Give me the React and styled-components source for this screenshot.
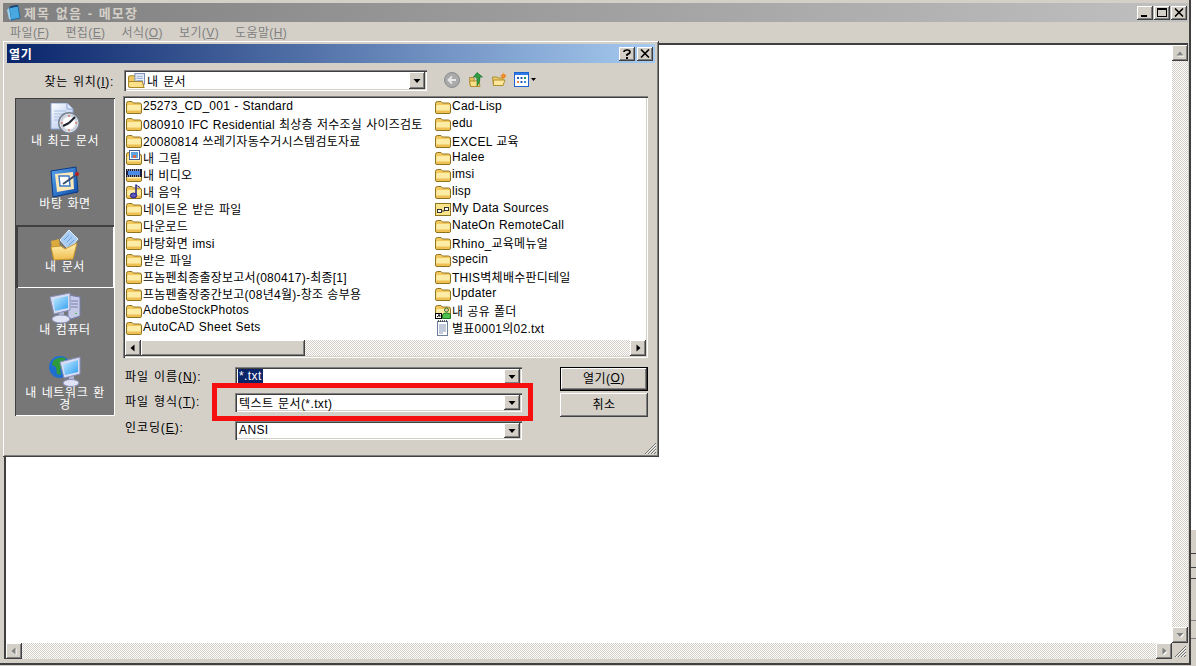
import React from "react";
import styled, { createGlobalStyle } from "styled-components";

const GlobalStyle = createGlobalStyle`
  html, body {
    margin: 0;
    padding: 0;
    background: #d4d0c8;
    overflow: hidden;
  }
  * {
    box-sizing: border-box;
  }
  body {
    font-family: "Liberation Sans", "Noto Sans CJK KR", sans-serif;
    font-size: 12px;
    color: #000;
  }
`;

const raised = `
  background: #d4d0c8;
  box-shadow: inset -1px -1px #404040, inset 1px 1px #fff, inset -2px -2px #808080, inset 2px 2px #d4d0c8;
`;

const sunken = `
  background: #fff;
  box-shadow: inset 1px 1px #808080, inset 2px 2px #404040, inset -1px -1px #fff, inset -2px -2px #d4d0c8;
`;

const dither = `
  background: repeating-conic-gradient(#d4d0c8 0 25%, #fff 0 50%) 0 0 / 2px 2px;
`;

const Desktop = styled.div`
  position: relative;
  display: flex;
  width: 1196px;
  height: 666px;
`;

const Notepad = styled.div`
  display: flex;
  flex-direction: column;
  width: 1191px;
  height: 665px;
  padding: 3px 1px 4px 3px;
  background: #d4d0c8;
  border-right: 2px solid #404040;
  border-bottom: 2px solid #404040;
`;

const RightStrip = styled.div`
  flex: 1;
  background:
    linear-gradient(#404040, #404040) 0 553px / 100% 1px no-repeat,
    linear-gradient(#404040, #404040) 0 567px / 100% 1px no-repeat,
    linear-gradient(#404040, #404040) 0 578px / 100% 1px no-repeat,
    linear-gradient(#808080, #808080) 0 620px / 100% 1px no-repeat,
    linear-gradient(#808080, #808080) 0 638px / 100% 1px no-repeat,
    linear-gradient(#fff 530px, #d4d0c8 530px);
`;

const TitleBar = styled.div`
  display: flex;
  align-items: center;
  flex: 0 0 18px;
  padding: 0 1px 0 3px;
  background: linear-gradient(90deg, #808080, #c0c0c0);
`;

const TitleText = styled.span`
  margin-left: 2px;
  font-weight: 700;
  font-size: 13px;
  letter-spacing: 1.1px;
  word-spacing: 1px;
  color: #d4d0c8;
`;

const TitleButtons = styled.div`
  display: flex;
  gap: ${(p) => p.$gap}px;
  margin-left: auto;
`;

const CaptionButton = styled.div`
  ${raised}
  display: flex;
  align-items: center;
  justify-content: center;
  width: 16px;
  height: 14px;
`;

const MenuBar = styled.div`
  display: flex;
  align-items: center;
  gap: 16px;
  flex: 0 0 21px;
  padding: 0 0 3px 7px;
  color: #808080;
  letter-spacing: 0.4px;
`;

const EditArea = styled.div`
  flex: 1;
  display: grid;
  grid-template-columns: 1fr 16px;
  grid-template-rows: 1fr 16px;
  margin-left: 1px;
  min-height: 0;
  background: #fff;
  border-top: 2px solid #404040;
  border-left: 2px solid #404040;
`;

const EditText = styled.div`
  background: #fff;
`;

const VScroll = styled.div`
  display: flex;
  flex-direction: column;
  justify-content: space-between;
  ${dither}
`;

const HScroll = styled.div`
  display: flex;
  justify-content: space-between;
  height: 16px;
  ${dither}
`;

const ScrollButton = styled.div`
  ${raised}
  display: flex;
  align-items: center;
  justify-content: center;
  flex: 0 0 16px;
  width: 16px;
  height: 16px;
`;

const ScrollThumb = styled.div`
  ${raised}
  flex: 0 0 164px;
  height: 16px;
  margin-right: auto;
`;

const Corner = styled.div`
  position: relative;
  background: #d4d0c8;
`;

const Dialog = styled.div`
  position: absolute;
  left: 3px;
  top: 41px;
  display: flex;
  flex-direction: column;
  width: 656px;
  height: 416px;
  padding: 3px 4px;
  ${raised}
`;

const DialogTitle = styled.div`
  display: flex;
  align-items: center;
  flex: 0 0 19px;
  padding: 0 2px 0 2px;
  background: linear-gradient(90deg, #0a246a, #a6caf0);
  color: #fff;
  font-weight: 700;
  letter-spacing: 0.6px;
`;

const LookInRow = styled.div`
  display: flex;
  align-items: center;
  height: 21px;
  margin-top: 7px;
`;

const LookInLabel = styled.span`
  flex: 0 0 107px;
  text-align: right;
  letter-spacing: 0.7px;
  word-spacing: 1px;
  padding-bottom: 1px;
`;

const Combo = styled.div`
  ${sunken}
  position: relative;
  display: flex;
  align-items: center;
  flex: 0 0 ${(p) => p.$width}px;
  width: ${(p) => p.$width}px;
  height: ${(p) => p.$height}px;
  padding: 0 0 1px 4px;
  letter-spacing: 0.4px;
  word-spacing: 1px;
`;

const LookInCombo = styled(Combo)`
  margin-left: 10px;
`;

const LookInValue = styled.span`
  margin-left: 2px;
`;

const DropButton = styled.div`
  ${raised}
  position: absolute;
  top: 2px;
  right: 2px;
  bottom: 2px;
  width: 16px;
  display: flex;
  align-items: center;
  justify-content: center;
`;

const Toolbar = styled.div`
  display: flex;
  align-items: center;
  gap: 8px;
  margin-left: 17px;
  padding-bottom: 2px;
`;

const ToolIcon = styled.div`
  display: flex;
  align-items: center;
  margin-left: ${(p) => p.$shift || 0}px;
`;

const DialogBody = styled.div`
  display: flex;
  align-items: flex-start;
  margin-top: 5px;
`;

const PlacesBar = styled.div`
  flex: 0 0 100px;
  height: 318px;
  margin: 2px 0 0 8px;
  padding: 1px;
  background: #777;
  box-shadow: inset 1px 1px #404040, inset -1px -1px #fff;
`;

const PlaceItem = styled.div`
  display: flex;
  flex-direction: column;
  align-items: center;
  height: 63px;
  padding-top: 4px;
  color: #fff;
  text-align: center;
  line-height: 12px;
  letter-spacing: 0.6px;
  word-spacing: 1px;
  box-shadow: ${(p) => (p.$active ? "inset 2px 2px #404040, inset -1px -1px #fff" : "none")};
`;

const PlaceLabel = styled.span`
  display: block;
  width: 90px;
`;

const MainColumn = styled.div`
  flex: 0 0 525px;
  margin-left: 8px;
`;

const FileList = styled.div`
  ${sunken}
  display: flex;
  flex-direction: column;
  height: 262px;
  padding: 2px;
`;

const FileGrid = styled.div`
  flex: 1;
  display: grid;
  grid-auto-flow: column;
  grid-template-rows: repeat(14, 17px);
  grid-template-columns: 309px 1fr;
  padding-left: 1px;
  min-height: 0;
  overflow: hidden;
`;

const FileRow = styled.div`
  display: flex;
  align-items: center;
  gap: 1px;
  white-space: nowrap;
  letter-spacing: 0.25px;
  word-spacing: 0.5px;
`;

const FileName = styled.span`
  padding-bottom: 1px;
`;

const FormArea = styled.div`
  display: flex;
  padding-top: 9px;
`;

const FieldGrid = styled.div`
  display: grid;
  grid-template-columns: 112px 287px;
  grid-template-rows: 26px 28px 19px;
  flex: 0 0 399px;
`;

const FieldLabel = styled.span`
  height: 19px;
  line-height: 19px;
  margin-top: ${(p) => p.$nudge || 0}px;
  padding-left: 2px;
  letter-spacing: 0.9px;
  word-spacing: 1px;
`;

const Selected = styled.span`
  background: #0a246a;
  color: #fff;
  padding: 0 1px;
  line-height: 14px;
  margin-left: -1px;
`;

const ButtonColumn = styled.div`
  display: flex;
  flex-direction: column;
  gap: 2px;
  margin-left: 38px;
`;

const PushButton = styled.div`
  ${raised}
  display: flex;
  align-items: center;
  justify-content: center;
  width: 88px;
  height: 24px;
  padding-bottom: 3px;
  letter-spacing: 0.5px;
  ${(p) => p.$default && `
    outline: 1px solid #000;
    outline-offset: -1px;
    box-shadow: inset -2px -2px #404040, inset 2px 2px #fff, inset -3px -3px #808080;
  `}
`;

const Grip = styled.svg`
  position: absolute;
  right: ${(p) => p.$right}px;
  bottom: ${(p) => p.$bottom}px;
`;

const RedHighlight = styled.div`
  position: absolute;
  left: 209px;
  top: 342px;
  width: 321px;
  height: 38px;
  border: 5px solid #f50f0f;
`;

function Arrow({ dir, color = "#000", shadow = false }) {
  const points = {
    up: "4,2.5 0.5,6.5 7.5,6.5",
    down: "0.5,2 7.5,2 4,6",
    left: "5.5,0.5 5.5,7.5 1.5,4",
    right: "2.5,0.5 2.5,7.5 6.5,4",
  }[dir];
  return (
    <svg width="8" height="8" viewBox="0 0 8 8">
      {shadow && <polygon points={points} fill="#fff" transform="translate(1 1)" />}
      <polygon points={points} fill={color} />
    </svg>
  );
}

function Folder({ kind }) {
  return (
    <svg width="16" height="16" viewBox="0 0 16 16">
      <path d="M0.5 4.5 Q0.5 2.5 2.5 2.5 H6 L7.5 4 H13.5 Q15.5 4 15.5 6 V13 Q15.5 14.5 14 14.5 H2 Q0.5 14.5 0.5 13 Z" fill="#f2c75c" stroke="#8f7420" />
      <path d="M1.2 7 Q1.4 6 2.5 6 H14.8 V12 H1.2 Z" fill="#fdeca6" />
      <path d="M1.2 11.5 H14.8 V13 Q14.8 13.8 14 13.8 H2 Q1.2 13.8 1.2 13 Z" fill="#eebf52" />
      {kind === "picture" && (
        <g>
          <rect x="3.5" y="0.5" width="10" height="9" fill="#fff" stroke="#44609c" />
          <rect x="5" y="2" width="7" height="6" fill="#5ca3e0" />
          <rect x="7" y="5" width="3" height="3" fill="#d8694c" />
        </g>
      )}
      {kind === "video" && (
        <g>
          <rect x="0" y="2" width="16" height="8" fill="#1b1b3a" />
          <rect x="2" y="4" width="12" height="4" fill="#4b8be8" />
          <path d="M1 3h1M3 3h1M5 3h1M7 3h1M9 3h1M11 3h1M13 3h1M1 9h1M3 9h1M5 9h1M7 9h1M9 9h1M11 9h1M13 9h1" stroke="#fff" />
        </g>
      )}
      {kind === "music" && (
        <g>
          <path d="M10 0.5 V11" stroke="#26267e" strokeWidth="1.5" />
          <path d="M10 1 L14 3.5" stroke="#26267e" />
          <ellipse cx="7.5" cy="11.5" rx="3.2" ry="2.4" fill="#5a55c0" stroke="#26267e" />
        </g>
      )}
      {kind === "data" && (
        <g>
          <rect x="0.5" y="2.5" width="15" height="12" fill="#fbe38a" stroke="#8a7420" />
          <rect x="2.5" y="8.5" width="4" height="3" fill="#fff" stroke="#333" />
          <rect x="9.5" y="6.5" width="4" height="3" fill="#fff" stroke="#333" />
          <path d="M6.5 10 H9.5 V9" fill="none" stroke="#333" />
        </g>
      )}
      {kind === "shared" && (
        <g>
          <circle cx="11.5" cy="7" r="2" fill="#f0c8a0" stroke="#2d7a2d" />
          <path d="M7.5 15.5 V12 Q7.5 10 11.5 10 Q15.5 10 15.5 12 V15.5 Z" fill="#4fc04f" stroke="#1e7a1e" />
          <rect x="0.5" y="10.5" width="6" height="5" fill="#fff" stroke="#000" />
          <path d="M2 14 L4.5 12 M3 12 H4.8 V13.8" fill="none" stroke="#000" />
        </g>
      )}
    </svg>
  );
}

function TextFile() {
  return (
    <svg width="16" height="16" viewBox="0 0 16 16">
      <rect x="2.5" y="1.5" width="10" height="14" fill="#fff" stroke="#6d7f9f" />
      <path d="M3 1h1M5 1h1M7 1h1M9 1h1M11 1h1" stroke="#333" strokeWidth="1.4" />
      <path d="M4 5h7M4 7h7M4 9h7M4 11h7M4 13h4" stroke="#8296b8" />
    </svg>
  );
}

function OpenDocsFolder() {
  return (
    <svg width="17" height="17" viewBox="0 0 16 16">
      <path d="M0.5 5 Q0.5 3.5 2 3.5 H8 V14.5 H2 Q0.5 14.5 0.5 13 Z" fill="#f0c860" stroke="#a98a2b" />
      <rect x="6.5" y="1.5" width="9" height="10" fill="#eef3fb" stroke="#7c8fb3" />
      <path d="M8 4h6M8 6h6M8 8h6" stroke="#9db2d6" />
      <path d="M0.5 9 H13.5 L15 14.5 H2 Q0.5 14.5 0.5 13 Z" fill="#fde08a" stroke="#a98a2b" />
    </svg>
  );
}

function BackIcon() {
  return (
    <svg width="16" height="16" viewBox="0 0 16 16">
      <circle cx="8" cy="8" r="7.5" fill="#a9a9a9" stroke="#8c8c8c" />
      <path d="M12 8 H5 M8 4.5 L4.5 8 L8 11.5" fill="none" stroke="#e8e8e8" strokeWidth="1.8" />
    </svg>
  );
}

function UpIcon() {
  return (
    <svg width="16" height="16" viewBox="0 0 16 16">
      <path d="M1.5 5.5 H6 V14.5 H2.5 Z" fill="#e8c060" stroke="#b08f30" />
      <path d="M1.5 9 H11 L12 14.5 H2.5 Z" fill="#fbe08c" stroke="#b08f30" />
      <path d="M9 0.5 L14.5 5 H12 Q12.5 10 9 14 Q9.5 8 8.5 5 H5.5 Z" fill="#2f9e3f" stroke="#14682a" strokeWidth="0.6" />
    </svg>
  );
}

function NewFolderIcon() {
  return (
    <svg width="16" height="16" viewBox="0 0 16 16">
      <path d="M1.5 5 H6 L7 6 H12 V13.5 H2.5 Z" fill="#eccb6a" stroke="#b08f30" />
      <path d="M2.5 8 H14 L12 13.5 H2.5 Z" fill="#fde79a" stroke="#b08f30" />
      <circle cx="12.5" cy="4" r="2" fill="#e8452c" />
      <path d="M12.5 0.5 V7.5 M9 4 H16 M10.5 2 L14.5 6 M14.5 2 L10.5 6" stroke="#f5a623" strokeWidth="0.7" />
    </svg>
  );
}

function ViewsIcon() {
  return (
    <svg width="22" height="15" viewBox="0 0 22 15">
      <rect x="0.5" y="0.5" width="14" height="14" fill="#fff" stroke="#1c62d0" />
      <rect x="1" y="1" width="13" height="2" fill="#2f7ae5" />
      <path d="M3 5h2v2H3z" fill="#2a57b5" />
      <path d="M6.5 5h2v2h-2z" fill="#2a57b5" />
      <path d="M10 5h2v2h-2z" fill="#1d9a5a" />
      <path d="M3 9h2v2H3z" fill="#e8853a" />
      <path d="M6.5 9h2v2h-2z" fill="#2a57b5" />
      <path d="M10 9h2v2h-2z" fill="#3c8ad8" />
      <polygon points="17,6 22,6 19.5,9" fill="#000" />
    </svg>
  );
}

function RecentIcon() {
  return (
    <svg width="32" height="32" viewBox="0 0 32 32">
      <defs>
        <linearGradient id="recentPage" x1="0" y1="0" x2="1" y2="1">
          <stop offset="0" stopColor="#fff" />
          <stop offset="1" stopColor="#a8c0ea" />
        </linearGradient>
        <radialGradient id="recentFace">
          <stop offset="0.6" stopColor="#fff" />
          <stop offset="1" stopColor="#aab4c6" />
        </radialGradient>
      </defs>
      <path d="M2 0 H18 L24 6 V26 H2 Z" fill="url(#recentPage)" stroke="#8ea6d6" />
      <path d="M18 0 V6 H24" fill="#dfe8f8" stroke="#8ea6d6" />
      <path d="M5 8h12M5 11h10M5 14h8M5 17h7" stroke="#a9bfe6" />
      <circle cx="20" cy="20" r="11" fill="#77808e" />
      <circle cx="20" cy="20" r="9" fill="url(#recentFace)" stroke="#e8ecf2" />
      <path d="M20 20 L26 14 M20 20 L14 23" stroke="#1d2430" strokeWidth="2" />
      <path d="M20 12v2M20 26v2M12 20h2M26 20h2" stroke="#d8452c" />
    </svg>
  );
}

function DesktopIcon() {
  return (
    <svg width="32" height="32" viewBox="0 0 32 32">
      <defs>
        <linearGradient id="deskBlue" x1="0" y1="0" x2="1" y2="1">
          <stop offset="0" stopColor="#5ba6ee" />
          <stop offset="1" stopColor="#0f4ca8" />
        </linearGradient>
      </defs>
      <path d="M2 5 L27 1 L29 26 L4 31 Z" fill="url(#deskBlue)" stroke="#0b3a86" />
      <path d="M6 8 L24 6 L25 23 L8 26 Z" fill="#fde9b8" />
      <path d="M10 10 H20 L21 20 H11 Z" fill="#fff" stroke="#3a78c8" strokeWidth="1.5" />
      <path d="M14 18 L27 9" stroke="#3d4f70" strokeWidth="2" />
      <circle cx="28" cy="8" r="2" fill="#b02020" />
    </svg>
  );
}

function DocsIcon() {
  return (
    <svg width="32" height="32" viewBox="0 0 32 32">
      <defs>
        <linearGradient id="docsFront" x1="0" y1="0" x2="0" y2="1">
          <stop offset="0" stopColor="#fff3b8" />
          <stop offset="1" stopColor="#f0bc4c" />
        </linearGradient>
      </defs>
      <path d="M2 12 L10 10 L12 28 L4 30 Z" fill="#dca93c" />
      <path d="M11 11 L20 1 L29 10 L20 21 Z" fill="#a9cdf2" stroke="#dfeefc" />
      <path d="M15 11 L20 6 M18 13 L23 8 M20 16 L25 11" stroke="#6da2de" />
      <path d="M2 18 L12 17 L16 20 L28 14 L24 30 L5 31 Z" fill="url(#docsFront)" stroke="#c8962c" />
    </svg>
  );
}

function ComputerIcon() {
  return (
    <svg width="32" height="32" viewBox="0 0 32 32">
      <defs>
        <linearGradient id="compScreen" x1="0" y1="0" x2="1" y2="1">
          <stop offset="0" stopColor="#c8ecff" />
          <stop offset="1" stopColor="#2ea0f0" />
        </linearGradient>
      </defs>
      <path d="M19 3 L31 5 V24 L22 27 L19 24 Z" fill="#c5cbe6" stroke="#7880ac" />
      <path d="M22 9 H29 M22 12 H29 M22 15 H29" stroke="#7880ac" />
      <rect x="26" y="21" width="2" height="1" fill="#48c048" />
      <path d="M1 5 L21 1 V18 L5 22 Z" fill="#d7dcf2" stroke="#8890bc" />
      <path d="M4 7 L19 4 V16 L6 19 Z" fill="url(#compScreen)" />
      <path d="M10 21 L15 20 V25 L10 26 Z" fill="#b0b6d2" />
      <ellipse cx="12" cy="27" rx="9" ry="4" fill="#dfe3f4" stroke="#8890bc" />
    </svg>
  );
}

function NetworkIcon() {
  return (
    <svg width="32" height="32" viewBox="0 0 32 32">
      <defs>
        <linearGradient id="netScreen" x1="0" y1="0" x2="1" y2="1">
          <stop offset="0" stopColor="#c8ecff" />
          <stop offset="1" stopColor="#2ea0f0" />
        </linearGradient>
      </defs>
      <circle cx="11" cy="12" r="11" fill="#1f6fd0" />
      <path d="M4 6 Q9 1 17 3 L14 8 L16 12 L11 14 L12 20 L8 19 L7 12 L3 10 Z" fill="#2f9b3c" />
      <path d="M11 7 L31 2 V19 L15 23 Z" fill="#d7dcf2" stroke="#8890bc" />
      <path d="M14 9.5 L29 5 V17 L16 20 Z" fill="url(#netScreen)" />
      <path d="M20 22 L25 21 V26 L20 27 Z" fill="#b0b6d2" />
      <ellipse cx="22" cy="28" rx="8" ry="3.5" fill="#dfe3f4" stroke="#8890bc" />
    </svg>
  );
}

const leftFiles = [
  ["25273_CD_001 - Standard"],
  ["080910 IFC Residential 최상층 저수조실 사이즈검토"],
  ["20080814 쓰레기자동수거시스템검토자료"],
  ["내 그림", "picture"],
  ["내 비디오", "video"],
  ["내 음악", "music"],
  ["네이트온 받은 파일"],
  ["다운로드"],
  ["바탕화면 imsi"],
  ["받은 파일"],
  ["프놈펜최종출장보고서(080417)-최종[1]"],
  ["프놈펜출장중간보고(08년4월)-창조 송부용"],
  ["AdobeStockPhotos"],
  ["AutoCAD Sheet Sets"],
];

const rightFiles = [
  ["Cad-Lisp"],
  ["edu"],
  ["EXCEL 교육"],
  ["Halee"],
  ["imsi"],
  ["lisp"],
  ["My Data Sources", "data"],
  ["NateOn RemoteCall"],
  ["Rhino_교육메뉴얼"],
  ["specin"],
  ["THIS벽체배수판디테일"],
  ["Updater"],
  ["내 공유 폴더", "shared"],
  ["별표0001의02.txt", "text"],
];

const places = [
  { label: "내 최근 문서", Icon: RecentIcon },
  { label: "바탕 화면", Icon: DesktopIcon },
  { label: "내 문서", Icon: DocsIcon, active: true },
  { label: "내 컴퓨터", Icon: ComputerIcon },
  { label: "내 네트워크 환경", Icon: NetworkIcon },
];

function CaptionGlyph({ type }) {
  if (type === "min") {
    return (
      <svg width="10" height="9" viewBox="0 0 10 9">
        <rect x="1" y="7" width="6" height="2" fill="#000" />
      </svg>
    );
  }
  if (type === "max") {
    return (
      <svg width="10" height="9" viewBox="0 0 10 9">
        <rect x="0.5" y="0.5" width="9" height="8" fill="none" stroke="#000" />
        <rect x="0" y="0" width="10" height="2" fill="#000" />
      </svg>
    );
  }
  if (type === "help") {
    return (
      <svg width="8" height="10" viewBox="0 0 8 10">
        <path d="M1 3 Q1 1 4 1 Q7 1 7 3 Q7 4.5 4 5.5 V7" fill="none" stroke="#000" strokeWidth="1.7" />
        <rect x="3" y="8" width="2" height="2" fill="#000" />
      </svg>
    );
  }
  return (
    <svg width="10" height="9" viewBox="0 0 10 9">
      <path d="M1 0.5 L9 8.5 M9 0.5 L1 8.5" stroke="#000" strokeWidth="1.6" />
    </svg>
  );
}

function GripLines() {
  return (
    <>
      <path d="M12 1 L1 12 M12 4 L4 12 M12 7 L7 12 M12 10 L10 12" stroke="#707070" strokeWidth="1" />
      <path d="M12 2 L2 12 M12 5 L5 12 M12 8 L8 12" stroke="#fff" strokeWidth="0.8" />
    </>
  );
}

function FileEntry({ name, kind }) {
  return (
    <FileRow>
      {kind === "text" ? <TextFile /> : <Folder kind={kind} />}
      <FileName>{name}</FileName>
    </FileRow>
  );
}

function OpenDialog() {
  return (
    <Dialog>
      <DialogTitle>
        열기
        <TitleButtons $gap={2}>
          <CaptionButton><CaptionGlyph type="help" /></CaptionButton>
          <CaptionButton><CaptionGlyph type="close" /></CaptionButton>
        </TitleButtons>
      </DialogTitle>

      <LookInRow>
        <LookInLabel>찾는 위치(<u>I</u>):</LookInLabel>
        <LookInCombo $width={303} $height={21}>
          <OpenDocsFolder />
          <LookInValue>내 문서</LookInValue>
          <DropButton><Arrow dir="down" /></DropButton>
        </LookInCombo>
        <Toolbar>
          <ToolIcon><BackIcon /></ToolIcon>
          <ToolIcon><UpIcon /></ToolIcon>
          <ToolIcon $shift={-1}><NewFolderIcon /></ToolIcon>
          <ToolIcon $shift={-1}><ViewsIcon /></ToolIcon>
        </Toolbar>
      </LookInRow>

      <DialogBody>
        <PlacesBar>
          {places.map(({ label, Icon, active }) => (
            <PlaceItem key={label} $active={active}>
              <Icon />
              <PlaceLabel>{label}</PlaceLabel>
            </PlaceItem>
          ))}
        </PlacesBar>

        <MainColumn>
          <FileList>
            <FileGrid>
              {leftFiles.concat(rightFiles).map(([name, kind]) => (
                <FileEntry key={name} name={name} kind={kind} />
              ))}
            </FileGrid>
            <HScroll>
              <ScrollButton><Arrow dir="left" /></ScrollButton>
              <ScrollThumb />
              <ScrollButton><Arrow dir="right" /></ScrollButton>
            </HScroll>
          </FileList>

          <FormArea>
            <FieldGrid>
              <FieldLabel $nudge={1}>파일 이름(<u>N</u>):</FieldLabel>
              <Combo $width={287} $height={19}>
                <Selected>*.txt</Selected>
                <DropButton><Arrow dir="down" /></DropButton>
              </Combo>
              <FieldLabel>파일 형식(<u>T</u>):</FieldLabel>
              <Combo $width={287} $height={19}>
                텍스트 문서(*.txt)
                <DropButton><Arrow dir="down" /></DropButton>
              </Combo>
              <FieldLabel $nudge={-2}>인코딩(<u>E</u>):</FieldLabel>
              <Combo $width={287} $height={19}>
                ANSI
                <DropButton><Arrow dir="down" /></DropButton>
              </Combo>
            </FieldGrid>
            <ButtonColumn>
              <PushButton $default>열기(<u>O</u>)</PushButton>
              <PushButton>취소</PushButton>
            </ButtonColumn>
          </FormArea>
        </MainColumn>
      </DialogBody>

      <Grip $right={2} $bottom={2} width="13" height="13" viewBox="0 0 13 13">
        <GripLines />
      </Grip>
      <RedHighlight />
    </Dialog>
  );
}

export default function App() {
  return (
    <>
      <GlobalStyle />
      <Desktop>
        <Notepad>
          <TitleBar>
            <svg width="16" height="16" viewBox="0 0 16 16">
              <path d="M3 3 L12 1 L14 13 L5 15 Z" fill="#4aa8e0" stroke="#1c6aa8" />
              <path d="M4 2 L12 0.5" stroke="#1c3f70" strokeWidth="1.5" />
              <path d="M1 5 L3 3 L5 15 L3 14 Z" fill="#9cd3f0" />
            </svg>
            <TitleText>제목 없음 - 메모장</TitleText>
            <TitleButtons $gap={1}>
              <CaptionButton><CaptionGlyph type="min" /></CaptionButton>
              <CaptionButton><CaptionGlyph type="max" /></CaptionButton>
              <CaptionButton><CaptionGlyph type="close" /></CaptionButton>
            </TitleButtons>
          </TitleBar>

          <MenuBar>
            <span>파일(<u>F</u>)</span>
            <span>편집(<u>E</u>)</span>
            <span>서식(<u>O</u>)</span>
            <span>보기(<u>V</u>)</span>
            <span>도움말(<u>H</u>)</span>
          </MenuBar>

          <EditArea>
            <EditText />
            <VScroll>
              <ScrollButton><Arrow dir="up" color="#808080" shadow /></ScrollButton>
              <ScrollButton><Arrow dir="down" color="#808080" shadow /></ScrollButton>
            </VScroll>
            <HScroll>
              <ScrollButton><Arrow dir="left" color="#808080" shadow /></ScrollButton>
              <ScrollButton><Arrow dir="right" color="#808080" shadow /></ScrollButton>
            </HScroll>
            <Corner>
              <Grip $right={1} $bottom={1} width="13" height="13" viewBox="0 0 13 13">
                <GripLines />
              </Grip>
            </Corner>
          </EditArea>
        </Notepad>
        <RightStrip />
        <OpenDialog />
      </Desktop>
    </>
  );
}
